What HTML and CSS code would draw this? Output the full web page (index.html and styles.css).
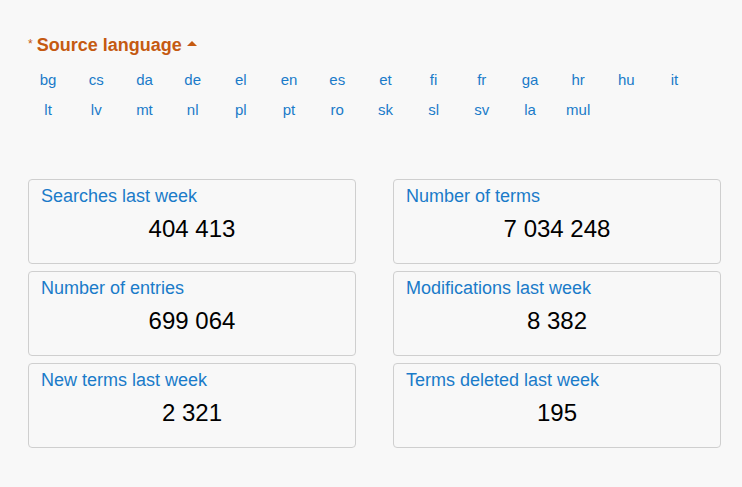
FILE: index.html
```html
<!DOCTYPE html>
<html lang="en">
<head>
<meta charset="UTF-8">
<title>Statistics</title>
<link rel="stylesheet" href="styles.css">
</head>
<body>
    <div class="page">
        <div class="source">
            <span class="req">*</span>
            <span class="source-title">Source language</span>
            <span class="caret"></span>
        </div>
        <div class="langs">
            <a>bg</a><a>cs</a><a>da</a><a>de</a><a>el</a><a>en</a><a>es</a>
            <a>et</a><a>fi</a><a>fr</a><a>ga</a><a>hr</a><a>hu</a><a>it</a>
            <a>lt</a><a>lv</a><a>mt</a><a>nl</a><a>pl</a><a>pt</a><a>ro</a>
            <a>sk</a><a>sl</a><a>sv</a><a>la</a><a>mul</a>
        </div>
        <div class="stats">
            <div class="card"><div class="label">Searches last week</div><div class="value">404 413</div></div>
            <div class="card"><div class="label">Number of terms</div><div class="value">7 034 248</div></div>
            <div class="card"><div class="label">Number of entries</div><div class="value">699 064</div></div>
            <div class="card"><div class="label">Modifications last week</div><div class="value">8 382</div></div>
            <div class="card"><div class="label">New terms last week</div><div class="value">2 321</div></div>
            <div class="card"><div class="label">Terms deleted last week</div><div class="value">195</div></div>
        </div>
    </div>
</body>
</html>
```

FILE: styles.css
```css
body {
    margin: 0;
    background: #f8f8f8;
    font-family: 'Liberation Sans', Arial, sans-serif;
}
.page {
    padding: 34px 21px 0 28px;
}
.source {
    display: flex;
    align-items: center;
    height: 22px;
}
.req {
    color: #c55a11;
    font-size: 12px;
    margin-right: 4px;
    margin-bottom: 2px;
}
.source-title {
    color: #c55a11;
    font-weight: bold;
    font-size: 18px;
}
.caret {
    width: 0;
    height: 0;
    border-left: 5px solid transparent;
    border-right: 5px solid transparent;
    border-bottom: 5px solid #c55a11;
    margin-left: 5px;
    margin-bottom: 3px;
}
.langs {
    display: grid;
    grid-template-columns: repeat(14, 48.2px);
    margin: 9px 0 0 -4px;
}
.langs a {
    color: #1a7bc9;
    font-size: 15px;
    text-align: center;
    line-height: 30px;
    cursor: pointer;
}
.stats {
    display: grid;
    grid-template-columns: 328px 328px;
    column-gap: 37px;
    row-gap: 7px;
    margin-top: 54px;
}
.card {
    height: 83px;
    border: 1px solid #cfcfcf;
    border-radius: 4px;
    padding: 0 12px;
}
.label {
    color: #1a7bc9;
    font-size: 18px;
    margin-top: 6px;
}
.value {
    color: #000;
    font-size: 24px;
    text-align: center;
    margin-top: 8px;
}
```
